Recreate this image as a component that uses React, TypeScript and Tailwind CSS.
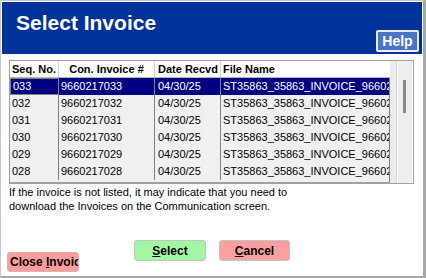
const rows = [
  { seq: '033', inv: '9660217033', date: '04/30/25' },
  { seq: '032', inv: '9660217032', date: '04/30/25' },
  { seq: '031', inv: '9660217031', date: '04/30/25' },
  { seq: '030', inv: '9660217030', date: '04/30/25' },
  { seq: '029', inv: '9660217029', date: '04/30/25' },
  { seq: '028', inv: '9660217028', date: '04/30/25' },
];

export default function App() {
  return (
    <div className="w-[426px] h-[278px] bg-white font-['Liberation_Sans',Arial,sans-serif] text-black">
      <div className="w-[426px] h-[278px] border-l border-t border-[#c8c8c8] border-r-[3px] border-b-[2px] border-r-[#a8a8a8] border-b-[#a8a8a8] p-[1px] flex flex-col">
        {/* Title bar */}
        <div className="h-[52px] bg-[#003399] flex justify-between">
          <div className="pt-[9px] pl-[14px] text-[21px] leading-[24px] font-bold text-white">
            Select Invoice
          </div>
          <button className="self-end mb-[2px] mr-[3px] w-[43px] h-[22px] bg-[#4a74c6] border-2 border-[#e8eef8] rounded-[2px] text-white font-bold text-[14px] leading-[16px] flex items-center justify-center">
            Help
          </button>
        </div>

        {/* Grid */}
        <div className="mt-[6px] ml-[7px] w-[405px] h-[124px] border border-[#a0a0a0] bg-[#ebebeb] flex">
          <div className="w-[380px] flex flex-col">
            <div className="h-[17px] bg-white flex text-[11px] leading-[17px] font-bold border-b border-[#b4b4b4]">
              <div className="w-[49px] pl-[2px] border-r border-[#d4d4d4]">Seq. No.</div>
              <div className="w-[96px] text-center border-r border-[#d4d4d4]">Con. Invoice #</div>
              <div className="w-[66px] pl-[3px] border-r border-[#d4d4d4]">Date Recvd</div>
              <div className="flex-1 pl-[2px]">File Name</div>
            </div>
            <div className="flex-1 bg-[#f0f0f0] border-r border-[#808080] border-b border-b-[#a0a0a0]">
              {rows.map((r, i) => {
                const sel = i === 0;
                return (
                  <div
                    key={r.seq}
                    className={`h-[17px] flex text-[11px] leading-[15px] ${
                      sel ? 'bg-[#000080] text-white' : ''
                    }`}
                  >
                    <div
                      className={`w-[49px] pl-[2px] border-r border-[#808080] ${
                        sel ? 'border border-[#3c8ee0] leading-[15px]' : 'pt-[1px]'
                      }`}
                    >
                      {r.seq}
                    </div>
                    <div className="w-[96px] pl-[2px] pt-[1px] border-r border-[#808080]">{r.inv}</div>
                    <div className="w-[66px] pl-[3px] pt-[1px] border-r border-[#808080]">{r.date}</div>
                    <div className="flex-1 pl-[2px] pt-[1px] overflow-hidden whitespace-nowrap">
                      ST35863_35863_INVOICE_{r.inv}.pdf
                    </div>
                  </div>
                );
              })}
            </div>
          </div>
          <div className="w-[7px] border-r border-[#d8d8d8]" />
          {/* Scrollbar */}
          <div className="w-[17px] border-l border-white border-r border-r-white bg-[#eeeeee] flex justify-center">
            <div className="w-[3px] h-[33px] mt-[19px] bg-[#8a8a8a]" />
          </div>
        </div>

        {/* Note */}
        <div className="mt-[1px] ml-[7px] text-[11px] leading-[14px]">
          If the invoice is not listed, it may indicate that you need to
          <br />
          download the Invoices on the Communication screen.
        </div>

        {/* Buttons */}
        <div className="mt-[27px] pl-[5px] flex items-start">
          <button className="mt-[12px] w-[72px] h-[20px] bg-[#ff9c9c] border border-[#e0b0b0] rounded-[3px] text-[12px] font-bold text-left pl-[2px] overflow-hidden whitespace-nowrap">
            Close <span className="underline">I</span>nvoice
          </button>
          <button className="ml-[55px] w-[72px] h-[21px] bg-[#a2f7a2] border border-[#c4c4c4] rounded-[3px] text-[12px] font-bold">
            <span className="underline">S</span>elect
          </button>
          <button className="ml-[13px] w-[71px] h-[21px] bg-[#ffa0a0] border border-[#c4c4c4] rounded-[3px] text-[12px] font-bold">
            <span className="underline">C</span>ancel
          </button>
        </div>
      </div>
    </div>
  );
}
